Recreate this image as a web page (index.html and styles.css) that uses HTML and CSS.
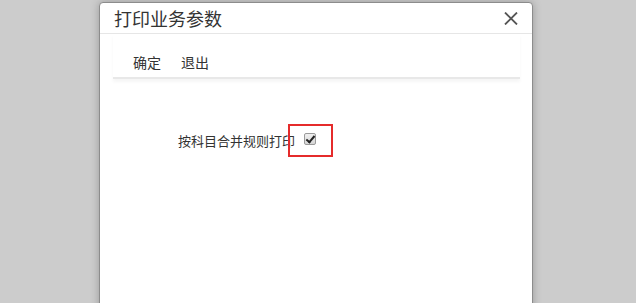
FILE: index.html
```
<!DOCTYPE html>
<html lang="zh">
<head>
<meta charset="utf-8">
<link rel="stylesheet" href="styles.css">
</head>
<body>
<div class="dialog">
  <div class="dialog-header">
    <span class="dialog-title">打印业务参数</span>
    <button class="close-btn" aria-label="close">
      <svg width="14" height="13" viewBox="0 0 14 13"><path d="M1 0.5 L13 12.5 M13 0.5 L1 12.5" stroke="#555" stroke-width="1.8" fill="none"/></svg>
    </button>
  </div>
  <div class="toolbar">
    <span class="tool">确定</span>
    <span class="tool">退出</span>
  </div>
  <div class="content">
    <label class="field">
      <span class="field-label">按科目合并规则打印</span>
      <input type="checkbox" class="chk" checked>
    </label>
  </div>
  <div class="highlight"></div>
</div>
</body>
</html>
```
FILE: styles.css
```
html, body {
  margin: 0;
  padding: 0;
  background: #cccccc;
  font-family: "Noto Sans CJK SC", "Noto Sans", sans-serif;
  overflow: hidden;
}
.dialog {
  position: relative;
  margin: 2px 0 0 99px;
  width: 432px;
  height: 330px;
  background: #fff;
  border: 1px solid #8c8c8c;
  border-radius: 4px;
  box-shadow: 0 0 8px rgba(0,0,0,0.25);
}
.dialog-header {
  display: flex;
  align-items: center;
  justify-content: space-between;
  height: 30px;
  padding: 0 14px 0 14px;
  border-bottom: 1px solid #e6e6e6;
}
.dialog-title {
  font-size: 18px;
  color: #333;
  line-height: 30px;
}
.close-btn {
  border: 0;
  background: none;
  padding: 0;
  display: flex;
  margin-top: 1px;
}
.toolbar {
  display: flex;
  gap: 20px;
  margin: 0 12px 0 13px;
  padding: 20px 0 7px 20px;
  line-height: 16px;
  font-size: 14px;
  color: #333;
  border-bottom: 2px solid #e8e8e8;
  box-shadow: 0 3px 3px rgba(0,0,0,0.04);
}
.content {
  padding: 53px 0 0 78px;
}
.field {
  display: flex;
  align-items: center;
  gap: 9px;
  font-size: 13px;
  color: #333;
  line-height: 18px;
}
.chk {
  appearance: none;
  -webkit-appearance: none;
  position: relative;
  margin: -4px 0 0 0;
  width: 12px;
  height: 12px;
  border: 1px solid #9a9a9a;
  border-radius: 2px;
  background: linear-gradient(#f0f0f0, #d6d6d6);
}
.chk:checked::after {
  content: "";
  position: absolute;
  left: 3px;
  top: 0px;
  width: 3px;
  height: 7px;
  border: solid #222;
  border-width: 0 2px 2px 0;
  transform: rotate(40deg);
}
.highlight {
  position: absolute;
  left: 188px;
  top: 121px;
  width: 41px;
  height: 29px;
  border: 2px solid #e52b2b;
}
```
